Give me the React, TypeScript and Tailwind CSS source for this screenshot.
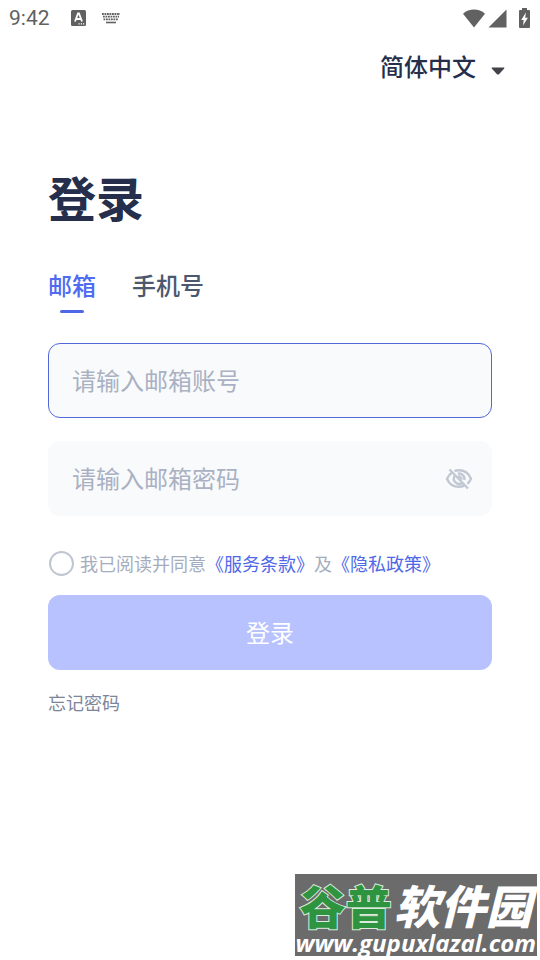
import { useState } from 'react'

const tabs = [
  { id: 'email', label: '邮箱' },
  { id: 'phone', label: '手机号' },
]

const fieldClass =
  'block h-[75px] w-full rounded-xl border bg-[#f9fafc] px-[23px] pb-[3px] text-2xl text-[#252e4a] outline-none placeholder:text-[#a9b1c2] focus:border-[#5068d8]'

function StatusBar() {
  return (
    <div className="flex h-9 items-center justify-between pl-[9px] pr-[10px] text-[#616161]">
      <div className="flex items-center">
        <span className="font-['Roboto'] text-[21px] leading-6">9:42</span>
        <svg className="ml-[21px] h-4 w-[15px]" viewBox="0 0 15 16" aria-hidden="true">
          <rect width="15" height="16" rx="1.5" fill="currentColor" />
          <path d="M4 11.5 7 3.5h1l3 8M5.2 9h4.6" fill="none" stroke="#fff" strokeWidth="1.8" />
          <path d="M7.5 13.8h1.2M9.8 13.8H11M12 13.8h1.2" stroke="#fff" strokeWidth="1.2" />
        </svg>
        <svg className="ml-[15px] h-3 w-5" viewBox="0 0 20 12" aria-hidden="true">
          <g stroke="currentColor" fill="none">
            <path d="M1 2h18" strokeWidth="2" strokeDasharray="1.8 0.7" />
            <path d="M2 4.7h16" strokeWidth="1.8" strokeDasharray="1.8 0.7" />
            <path d="M2.5 7.3h15" strokeWidth="1.8" strokeDasharray="1.8 0.7" />
            <path d="M5 10.5h10" strokeWidth="1.6" />
          </g>
        </svg>
      </div>
      <div className="flex items-center" aria-hidden="true">
        <svg className="h-[19px] w-6" viewBox="0 0 24 19">
          <path d="M12 18.5 1 4.8C4 2 8 .6 12 .6S20 2 23 4.8z" fill="currentColor" />
        </svg>
        <svg className="ml-[2px] h-[19px] w-[19px]" viewBox="0 0 19 19">
          <path d="M18.5.5v18H.5z" fill="currentColor" />
        </svg>
        <svg className="ml-3 h-5 w-[11px]" viewBox="0 0 11 20">
          <path d="M3 0h5v2h2a1 1 0 0 1 1 1v16a1 1 0 0 1-1 1H1a1 1 0 0 1-1-1V3a1 1 0 0 1 1-1h2z" fill="currentColor" />
          <path d="M6.9 4.5 2.2 12h2.5L4 17.5l4.9-7.8H6.2z" fill="#fff" />
        </svg>
      </div>
    </div>
  )
}

function EyeOffIcon() {
  return (
    <svg className="h-6 w-7" viewBox="0 0 28 24" fill="none" stroke="currentColor" strokeWidth="2.4" aria-hidden="true">
      <path d="M7.5 5.2C5 6.700 3.100 9 2 12c2.200 5 6.800 7.800 12 7.800 2 0 3.700-.4 5.300-1.100M9.500 4C11 3.500 12.500 3.300 14 3.300c5.200 0 9.800 3.300 12 8.500-.8 1.900-2 3.600-3.500 5" />
      <path d="M9.600 8.800a5.400 5.400 0 0 0 7.700 7.200M12.800 6.700a5.400 5.400 0 0 1 6.500 6.400" />
      <path d="M13 9.700a2.600 2.600 0 0 1 3.300 3" />
      <path d="M4.500 2.500 23 21.500" />
    </svg>
  )
}

function Watermark() {
  return (
    <div className="mb-1 mr-[3px] mt-auto flex flex-col items-center self-end bg-[#6b6b6b] px-px text-white">
      <div className="flex gap-[2px] pt-1 text-[46px] font-black leading-[52px]">
        <span className="text-[#2f9440] [paint-order:stroke_fill] [-webkit-text-stroke:2px_#dcebdc]">谷普</span>
        <span className="italic">软件园</span>
      </div>
      <div className="font-['Open_Sans'] text-2xl font-bold italic leading-[26px]">www.gupuxlazal.com</div>
    </div>
  )
}

export default function App() {
  const [tab, setTab] = useState('email')
  const [account, setAccount] = useState('')
  const [password, setPassword] = useState('')
  const [showPassword, setShowPassword] = useState(false)
  const [agreed, setAgreed] = useState(false)

  return (
    <div className="flex min-h-screen flex-col bg-white font-['Noto_Sans_CJK_SC',sans-serif]">
      <StatusBar />

      {/* Language */}
      <div className="flex items-center justify-end pr-[35px] pt-[10px] text-[#252e4a]">
        <select
          aria-label="语言"
          className="h-10 appearance-none bg-transparent text-2xl font-medium leading-9 outline-none"
        >
          <option>简体中文</option>
        </select>
        <svg className="ml-[15px] mt-[10px] h-2 w-[14px]" viewBox="0 0 14 8" aria-hidden="true">
          <path d="M1 .5h12q.8.4.2 1.100L8 7.200q-1 .8-2 0L.8 1.600Q.2.900 1 .5z" fill="#41424a" />
        </svg>
      </div>

      <main className="px-12 pt-[74px]">
        <h1 className="text-5xl font-bold leading-[72px] text-[#252e4a]">登录</h1>

        <div className="mt-[35px] flex gap-9" role="tablist">
          {tabs.map((t) => (
            <button
              key={t.id}
              role="tab"
              aria-selected={tab === t.id}
              onClick={() => setTab(t.id)}
              className={`flex flex-col items-center gap-[7px] text-2xl font-medium leading-9 ${tab === t.id ? 'text-[#4f6bf0]' : 'text-[#4d586e]'}`}
            >
              {t.label}
              <span className={`h-[3px] w-6 rounded-full ${tab === t.id ? 'bg-[#4f68e8]' : 'bg-transparent'}`} />
            </button>
          ))}
        </div>

        <form className="mt-[30px]" onSubmit={(e) => e.preventDefault()}>
          <input
            type="text"
            aria-label="邮箱账号"
            placeholder="请输入邮箱账号"
            value={account}
            onChange={(e) => setAccount(e.target.value)}
            className={`${fieldClass} border-[#5068d8]`}
          />

          <div className="relative mt-[23px]">
            <input
              type={showPassword ? 'text' : 'password'}
              aria-label="邮箱密码"
              placeholder="请输入邮箱密码"
              value={password}
              onChange={(e) => setPassword(e.target.value)}
              className={`${fieldClass} border-[#f9fafc]`}
            />
            <button
              type="button"
              aria-label="显示密码"
              onClick={() => setShowPassword(!showPassword)}
              className="absolute inset-y-0 right-[19px] text-[#c1c7d3]"
            >
              <EyeOffIcon />
            </button>
          </div>

          <div className="mt-[33px] flex items-center text-lg leading-7 text-[#a5adbd]">
            <input
              id="agree"
              type="checkbox"
              checked={agreed}
              onChange={(e) => setAgreed(e.target.checked)}
              className="ml-px mr-[6px] h-[25px] w-[25px] appearance-none rounded-full border-2 border-[#bfc5d1] checked:border-[#4f6bf0] checked:bg-[#4f6bf0]"
            />
            <label htmlFor="agree">我已阅读并同意</label>
            <a href="#terms" className="text-[#4f68e8]">《服务条款》</a>
            <span>及</span>
            <a href="#privacy" className="text-[#4f68e8]">《隐私政策》</a>
          </div>

          <button type="submit" className="mt-[18px] block h-[75px] w-full rounded-xl bg-[#b7c2ff] pb-[2px] text-2xl text-white">
            登录
          </button>
        </form>

        <a href="#forgot" className="mt-[18px] inline-block text-lg leading-7 text-[#7c869a]">忘记密码</a>
      </main>

      <Watermark />
    </div>
  )
}
